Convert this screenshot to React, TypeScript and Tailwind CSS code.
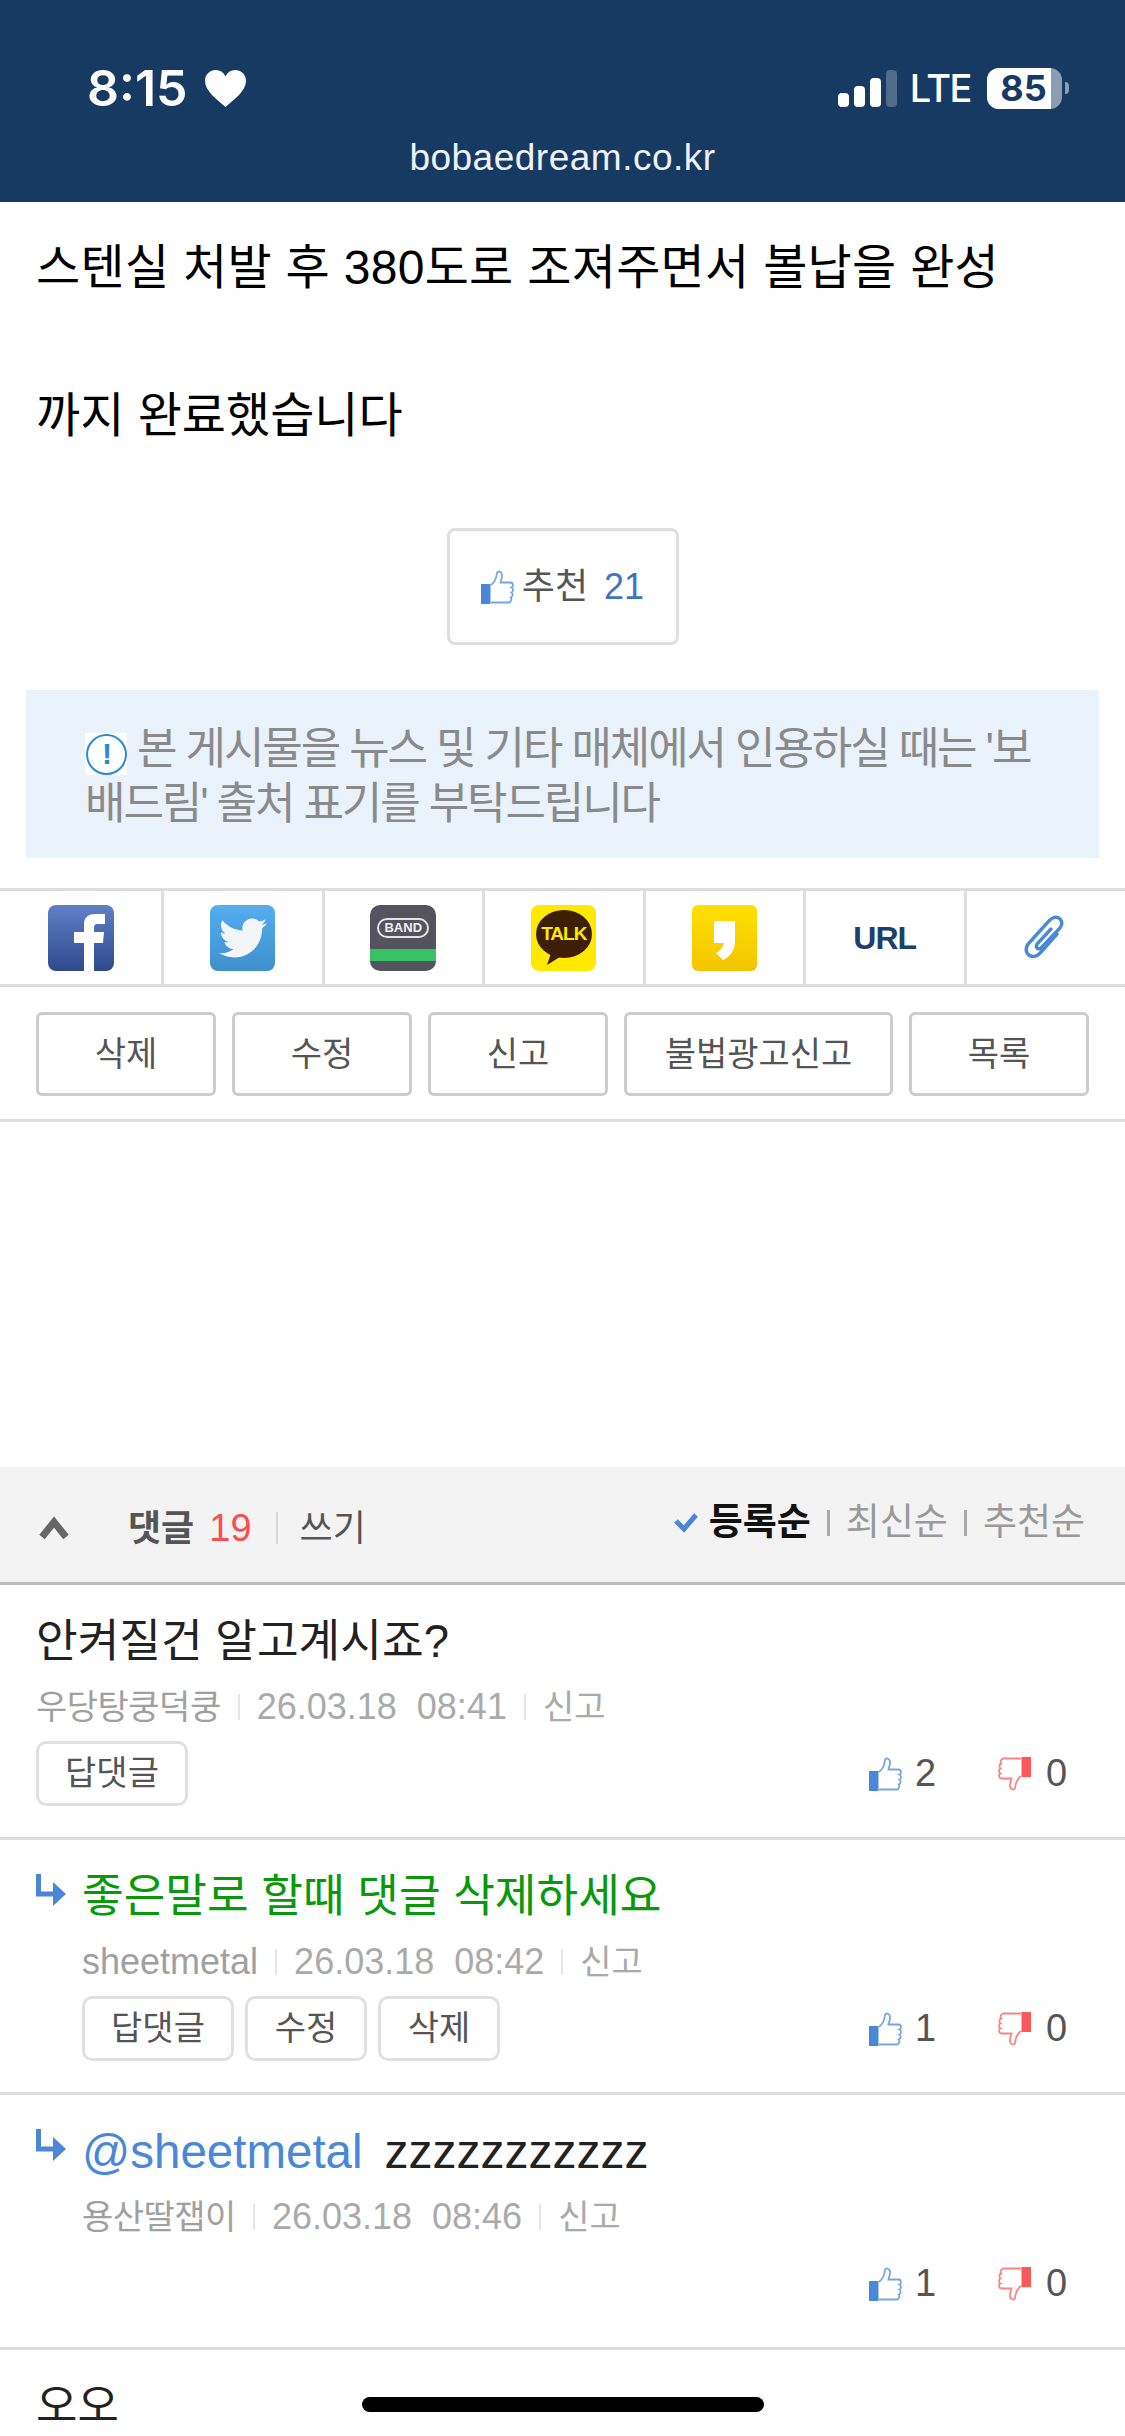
import { FaTwitter } from 'react-icons/fa';

const font = { fontFamily: '"Liberation Sans", "Noto Sans CJK KR", sans-serif' };

function Thumb({ down = false, className = '' }: { down?: boolean; className?: string }) {
  const main = down ? '#f9595b' : '#4a87d6';
  return (
    <svg viewBox="0 0 33 34" className={`${className} ${down ? 'rotate-180' : ''}`}>
      <path
        d="M10 15 C14 12 15.5 8 16 3 C16.3 0.6 20.5 1 21 4.5 C21.4 7.5 20 10 19.5 12.5 L29.5 12.5 C32.5 12.5 32.5 17 30.5 17.5 C32.5 18.5 32.5 22 30.5 22.5 C32 23.5 32 27 29.8 27.5 C31 29 30 32.5 27.5 32.5 L10 32.5"
        fill="none"
        stroke={main}
        strokeOpacity="0.75"
        strokeWidth="1.8"
      />
      <rect x="0" y="14" width="9.5" height="20" fill={main} />
    </svg>
  );
}

function ReplyArrow() {
  return (
    <svg viewBox="0 0 30 32" className="w-[30px] h-[32px] shrink-0">
      <path d="M2.5 0 V20 H18" fill="none" stroke="#4a87d6" strokeWidth="5" />
      <path d="M17 8 L30 20 L17 32 Z" fill="#4a87d6" />
    </svg>
  );
}

function MetaLine({ name, date, latin = false }: { name: string; date: string; latin?: boolean }) {
  return (
    <div className="flex items-center h-[36px] text-[34px] text-[#aaaaaa] whitespace-pre">
      <span className={latin ? 'text-[36px] text-[#a0a0a0]' : 'text-[#a0a0a0] tracking-[-0.5px]'}>{name}</span>
      <span className="mx-[17px] w-[2px] h-[26px] bg-[#e6e6e6]" />
      <span className="text-[36px]">{date}</span>
      <span className="mx-[17px] w-[2px] h-[26px] bg-[#e6e6e6]" />
      <span>신고</span>
    </div>
  );
}

function Votes({ up }: { up: number }) {
  return (
    <div className="flex items-center ml-auto mr-[22px] text-[38px] text-[#555555]">
      <Thumb className="w-[33px] h-[34px]" />
      <span className="ml-[13px] w-[22px]">{up}</span>
      <Thumb down className="ml-[61px] w-[33px] h-[34px]" />
      <span className="ml-[15px] w-[21px]">0</span>
    </div>
  );
}

function SmallButton({ label, width }: { label: string; width: string }) {
  return (
    <div className={`${width} h-[65px] flex items-center justify-center border-[3px] border-[#e0e0e0] rounded-[10px] text-[34px] text-[#555555]`}>
      {label}
    </div>
  );
}

function Comment({
  children,
  reply = false,
  name,
  date,
  up,
  latin = false,
  buttons = [],
}: {
  children: React.ReactNode;
  reply?: boolean;
  name: string;
  date: string;
  up: number;
  latin?: boolean;
  buttons?: { label: string; width: string }[];
}) {
  return (
    <div className="h-[255px] border-b-[3px] border-[#dddddd] pt-[26px] px-[36px] flex">
      {reply && (
        <div className="w-[46px] shrink-0 pt-[8px]">
          <ReplyArrow />
        </div>
      )}
      <div className="flex-1 min-w-0">
        <div className="h-[62px] flex items-center whitespace-nowrap">{children}</div>
        <div className="mt-[16px]">
          <MetaLine name={name} date={date} latin={latin} />
        </div>
        <div className="mt-[16px] h-[65px] flex items-center gap-[11px]">
          {buttons.map((b) => (
            <SmallButton key={b.label} label={b.label} width={b.width} />
          ))}
          <Votes up={up} />
        </div>
      </div>
    </div>
  );
}

function ShareIcons() {
  return (
    <div className="mt-[30px] grid grid-cols-[164px_repeat(5,160.5px)_1fr] h-[99px] border-y-[3px] border-[#dddddd]">
      <div className="flex items-center justify-center border-r-[3px] border-[#dddddd]">
        <div className="w-[66px] h-[66px] rounded-[8px] overflow-hidden bg-gradient-to-b from-[#5f80c8] to-[#2f4a8c]">
          <svg viewBox="0 0 66 66" className="w-full h-full">
            <path d="M36 66 V38 H26 V27 H36 V19 C36 12 41 9 47 9 H57 V19 H50 C47 19 46 20 46 23 V27 H56 L55 38 H46 V66 Z" fill="#ffffff" />
          </svg>
        </div>
      </div>
      <div className="flex items-center justify-center border-r-[3px] border-[#dddddd]">
        <div className="w-[65px] h-[66px] rounded-[8px] flex items-center justify-center bg-gradient-to-b from-[#55aeee] to-[#3f8fcd]">
          <FaTwitter className="w-[48px] h-[48px] text-[#f2f6f9]" />
        </div>
      </div>
      <div className="flex items-center justify-center border-r-[3px] border-[#dddddd]">
        <div className="w-[66px] h-[66px] rounded-[10px] overflow-hidden bg-[#55545e] flex flex-col items-center">
          <div className="mt-[13px] h-[20px] w-[52px] rounded-full border-2 border-[#e4e4e4] flex items-center justify-center text-[13px] font-bold text-[#f0f0f0]">
            BAND
          </div>
          <div className="mt-[11px] w-full h-[12px] bg-[#38c163]" />
        </div>
      </div>
      <div className="flex items-center justify-center border-r-[3px] border-[#dddddd]">
        <div className="w-[65px] h-[66px] rounded-[8px] bg-[#ffe900] relative">
          <svg viewBox="0 0 65 66" className="absolute inset-0 w-full h-full">
            <ellipse cx="33" cy="29" rx="28" ry="24" fill="#3d1f08" />
            <path d="M20 48 L16 60 L32 50 Z" fill="#3d1f08" />
          </svg>
          <span className="absolute inset-x-0 top-[18px] text-center text-[19px] leading-[22px] font-bold text-[#ffe900] tracking-[-1px]">
            TALK
          </span>
        </div>
      </div>
      <div className="flex items-center justify-center border-r-[3px] border-[#dddddd]">
        <div className="w-[65px] h-[66px] rounded-[6px] bg-gradient-to-b from-[#ffe000] to-[#f3c400]">
          <svg viewBox="0 0 65 66" className="w-full h-full">
            <path d="M22 16 H43 V36 C43 45 38 52 31 55 L24 48 C28 46 31 42 32 38 H22 Z" fill="#ffffff" />
          </svg>
        </div>
      </div>
      <div className="flex items-center justify-center border-r-[3px] border-[#dddddd] text-[32px] font-bold text-[#1d3f6b] tracking-[-1px]">
        URL
      </div>
      <div className="flex items-center justify-center">
        <svg viewBox="0 0 44 48" className="w-[44px] h-[48px]">
          <path
            d="M33 20 L17 38 C13 43 7 44 4 40 C1 37 2 32 5 29 L25 7 C28 3 33 2 36 5 C39 8 38 12 35 15 L18 33 C16 35 14 35 13 34 C12 33 12 31 14 29 L27 15"
            fill="none"
            stroke="#4a8ad4"
            strokeWidth="3.4"
            strokeLinecap="round"
          />
        </svg>
      </div>
    </div>
  );
}

export default function App() {
  return (
    <div className="relative w-[1125px] h-[2436px] overflow-hidden bg-white text-black" style={font}>
      {/* Status bar + url */}
      <div className="h-[202px] bg-[#173a63] text-white">
        <div className="flex items-center justify-between h-[106px] pt-[70px] pl-[87px] pr-[56px] font-['Inter']">
          <div className="flex items-center gap-[17px]">
            <span className="text-[50px] leading-[40px] font-semibold">8:15</span>
            <svg viewBox="0 0 40 36" className="w-[41px] h-[37px]">
              <path d="M20 36 C12 29 0 21 0 10.5 C0 4 5 0 10.5 0 C14.5 0 18 2 20 6 C22 2 25.5 0 29.5 0 C35 0 40 4 40 10.5 C40 21 28 29 20 36 Z" fill="#ffffff" />
            </svg>
          </div>
          <div className="flex items-center">
            <div className="flex items-end gap-[5px] h-[38px]">
              <div className="w-[11px] h-[14px] rounded-[4px] bg-white" />
              <div className="w-[11px] h-[21px] rounded-[4px] bg-white" />
              <div className="w-[11px] h-[29px] rounded-[4px] bg-white" />
              <div className="w-[11px] h-[37px] rounded-[4px] bg-white/25" />
            </div>
            <span className="ml-[13px] text-[38px] leading-[40px] font-medium tracking-[-1.5px]">LTE</span>
            <div className="relative ml-[16px] w-[75px] h-[41px] rounded-[12px] overflow-hidden bg-white/50">
              <div className="w-[64px] h-full bg-white" />
              <span className="absolute inset-0 flex items-center justify-center pr-[2px] text-[#173a63] text-[36px] font-bold">85</span>
            </div>
            <div className="ml-[3px] w-[4px] h-[12px] rounded-r-full bg-white/50" />
          </div>
        </div>
        <div className="mt-[32px] text-center text-[37px] leading-[40px] text-[#eef2f6] tracking-[0.5px]">bobaedream.co.kr</div>
      </div>

      {/* Post body */}
      <div className="pt-[29px] px-[36px] text-[48px] leading-[74px] text-black whitespace-nowrap">
        <span className="tracking-[0.3px]">스텐실 처발 후 380도로 조져주면서 볼납을 완성</span>
        <br />
        <br />
        까지 완료했습니다
      </div>

      <div className="mt-[75px] flex justify-center">
        <div className="w-[232px] h-[117px] flex items-center justify-center border-[3px] border-[#dedede] rounded-[8px] text-[36px] text-[#555555]">
          <Thumb className="w-[33px] h-[34px] mr-[8px]" />
          <span>추천</span>
          <span className="ml-[16px] text-[#3f74c0]">21</span>
        </div>
      </div>

      {/* Source notice */}
      <div className="mt-[45px] mx-[26px] h-[168px] bg-[#eaf3fb] pt-[31px] px-[59px] text-[44px] leading-[55px] text-[#8a8a8a] tracking-[-2.1px] whitespace-nowrap">
        <span className="inline-flex items-center justify-center w-[42px] h-[42px] bg-white align-[0px] mr-[10px]">
          <span className="w-[41px] h-[41px] rounded-full border-2 border-[#2a8bd0] flex items-center justify-center text-[30px] font-bold leading-none text-[#2a8bd0]">!</span>
        </span>
        본 게시물을 뉴스 및 기타 매체에서 인용하실 때는 '보
        <br />
        배드림' 출처 표기를 부탁드립니다
      </div>

      <ShareIcons />

      {/* Post buttons */}
      <div className="mt-[25px] mx-[36px] flex gap-[16px] text-[34px] text-[#555555]">
        <div className="w-[180px] h-[84px] flex items-center justify-center border-[3px] border-[#cccccc] rounded-[6px]">삭제</div>
        <div className="w-[180px] h-[84px] flex items-center justify-center border-[3px] border-[#cccccc] rounded-[6px]">수정</div>
        <div className="w-[180px] h-[84px] flex items-center justify-center border-[3px] border-[#cccccc] rounded-[6px]">신고</div>
        <div className="w-[269px] h-[84px] flex items-center justify-center border-[3px] border-[#cccccc] rounded-[6px]">불법광고신고</div>
        <div className="w-[180px] h-[84px] flex items-center justify-center border-[3px] border-[#cccccc] rounded-[6px]">목록</div>
      </div>
      <div className="mt-[23px] h-[3px] bg-[#dddddd]" />

      {/* Comments header */}
      <div className="mt-[345px] h-[118px] bg-[#f3f3f3] border-b-[3px] border-[#bbbbbb] flex items-center pl-[38px] pr-[40px]">
        <svg viewBox="0 0 32 24" className="w-[32px] h-[24px] mt-[6px]">
          <path d="M4 21 L16 6 L28 21" fill="none" stroke="#666666" strokeWidth="7" />
        </svg>
        <span className="ml-[58px] mt-[8px] text-[36px] font-bold text-[#555555]">댓글</span>
        <span className="ml-[15px] mt-[8px] text-[38px] text-[#f84e4e]">19</span>
        <span className="ml-[24px] mt-[6px] w-[2px] h-[32px] bg-[#d8d8d8]" />
        <span className="ml-[22px] mt-[8px] text-[36px] text-[#555555]">쓰기</span>
        <div className="ml-auto flex items-center -mt-[4px] text-[37px] text-[#999999]">
          <svg viewBox="0 0 26 20" className="w-[26px] h-[20px] mr-[10px]">
            <path d="M3 8 L11 16 L23 2" fill="none" stroke="#4a87d6" strokeWidth="5" />
          </svg>
          <span className="font-bold text-[#111111]">등록순</span>
          <span className="mx-[16px] w-[3px] h-[26px] bg-[#aaaaaa]" />
          <span>최신순</span>
          <span className="mx-[16px] w-[3px] h-[26px] bg-[#aaaaaa]" />
          <span>추천순</span>
        </div>
      </div>

      {/* Comments */}
      <Comment name="우당탕쿵덕쿵" date="26.03.18  08:41" up={2} buttons={[{ label: '답댓글', width: 'w-[152px]' }]}>
        <span className="text-[45.3px] text-[#222222]">안켜질건 알고계시죠?</span>
      </Comment>
      <Comment
        reply
        latin
        name="sheetmetal"
        date="26.03.18  08:42"
        up={1}
        buttons={[
          { label: '답댓글', width: 'w-[152px]' },
          { label: '수정', width: 'w-[122px]' },
          { label: '삭제', width: 'w-[122px]' },
        ]}
      >
        <span className="text-[45.3px] text-[#079907]">좋은말로 할때 댓글 삭제하세요</span>
      </Comment>
      <Comment reply name="용산딸잽이" date="26.03.18  08:46" up={1}>
        <span className="text-[47.5px] text-[#4a87d6]">@sheetmetal</span>
        <span className="ml-[22px] text-[48px] text-[#222222]">zzzzzzzzzzz</span>
      </Comment>
      <div className="pt-[34px] px-[36px] text-[45px] leading-[46px] text-[#222222]">오오</div>

      {/* Home indicator */}
      <div className="absolute left-[362px] top-[2397px] w-[402px] h-[15px] rounded-full bg-black" />
    </div>
  );
}
